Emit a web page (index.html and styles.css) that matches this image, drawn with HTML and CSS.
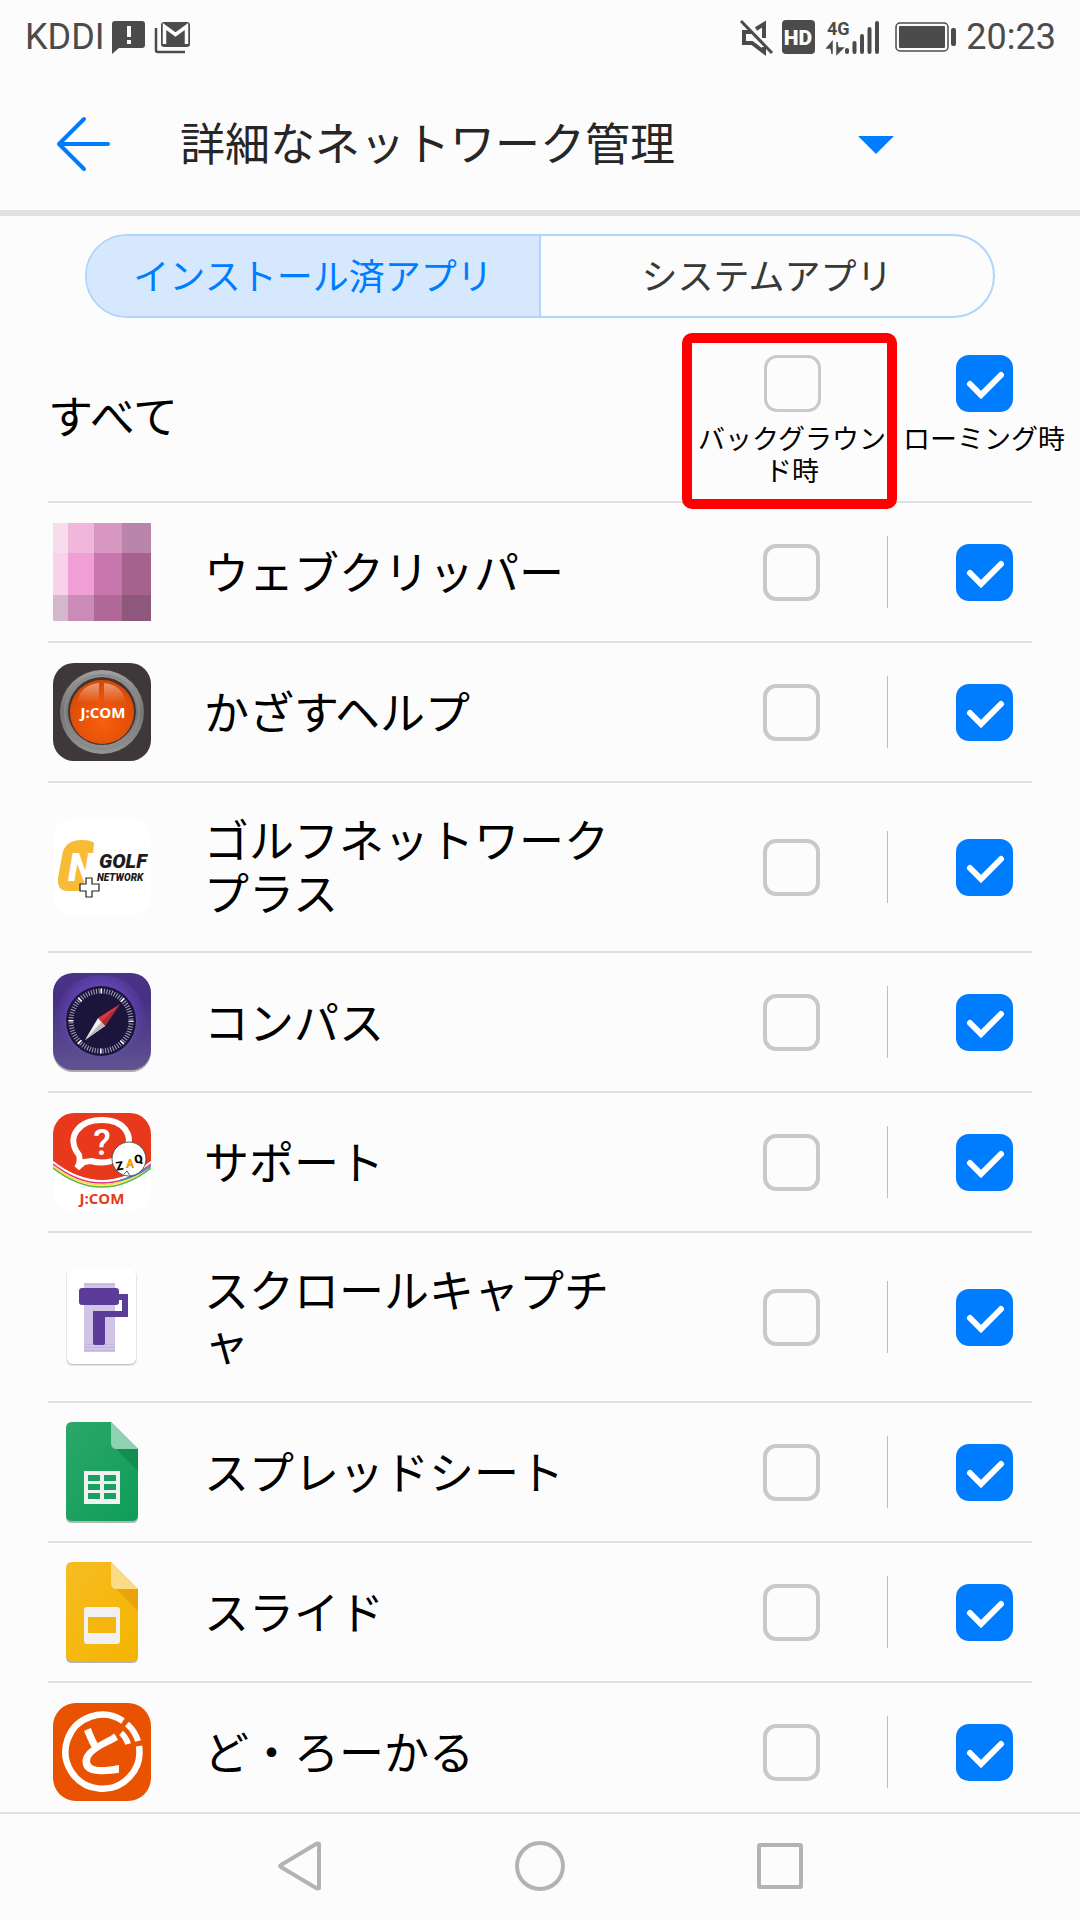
FILE: index.html
```html
<!DOCTYPE html>
<html lang="ja">
<head>
    <meta charset="UTF-8">
    <meta name="viewport" content="width=device-width, initial-scale=1.0">
    <title>詳細なネットワーク管理</title>
    <link rel="stylesheet" href="styles.css">
</head>
<body>
    <div class="status-bar">
        <span>KDDI</span>
        <svg class="message-icon" width="33" height="33" viewBox="0 0 33 33">
            <path d="M3 0h27a3 3 0 0 1 3 3v21a3 3 0 0 1-3 3H7l-7 6V3a3 3 0 0 1 3-3z" fill="#4b4b4b"/>
            <path d="M15 5h4v11h-4zM15 19h4v4h-4z" fill="#fcfcfc"/>
        </svg>
        <svg width="36" height="33" viewBox="0 0 36 33">
            <rect x="6" y="1" width="29" height="25" rx="3" fill="#4b4b4b"/>
            <path d="M9.500 23V5.500l11 8L31.500 5.500V23" fill="none" stroke="#fcfcfc" stroke-width="3.500"/>
            <path d="M1 7v22a2 2 0 0 0 2 2h27" fill="none" stroke="#4b4b4b" stroke-width="2.500"/>
        </svg>
        <div class="status-right">
            <svg width="33" height="34" viewBox="0 0 33 34">
                <path d="M12 12H4v11h8l12 9v-5M16 9l8-5v14" fill="none" stroke="#4b4b4b" stroke-width="4"/>
                <path d="M3 0l30 32" stroke="#fcfcfc" stroke-width="3"/>
                <path d="M1 1l31 32" stroke="#4b4b4b" stroke-width="3"/>
            </svg>
            <svg width="33" height="34" viewBox="0 0 33 34">
                <rect width="33" height="34" rx="4" fill="#4b4b4b"/>
                <text x="16" y="25" class="hd">HD</text>
            </svg>
            <svg class="signal" width="53" height="34" viewBox="0 0 53 34">
                <text x="0" y="15" class="network">4G</text>
                <path d="M5 34V22L0 28h3M10 22v12l6-6h-4" fill="#4b4b4b" stroke="#4b4b4b" stroke-width="1.500"/>
                <path d="M20 30v2M27.500 23v9M35 16v16M42.500 9v23M50 3v29" stroke="#4b4b4b" stroke-width="4" stroke-linecap="round"/>
            </svg>
            <svg width="62" height="30" viewBox="0 0 62 30">
                <rect x="1" y="1" width="52" height="28" rx="4" fill="none" stroke="#4b4b4b" stroke-width="1.500"/>
                <rect x="4" y="4" width="46" height="22" rx="1" fill="#4b4b4b"/>
                <rect x="56" y="6" width="5" height="18" rx="2" fill="#4b4b4b"/>
            </svg>
            <span>20:23</span>
        </div>
    </div>

    <header class="title-bar">
        <button class="back" aria-label="戻る">
            <svg width="56" height="56" viewBox="0 0 56 56">
                <path d="M28 3L3 28l25 25M3 28h49" fill="none" stroke="#007dff" stroke-width="4" stroke-linecap="round" stroke-linejoin="round"/>
            </svg>
        </button>
        <h1>詳細なネットワーク管理</h1>
        <button class="more" aria-label="メニュー">
            <svg width="36" height="18" viewBox="0 0 36 18"><path d="M0 0h36L18 18z" fill="#007dff"/></svg>
        </button>
    </header>

    <main>
        <div class="tabs">
            <button class="active">インストール済アプリ</button>
            <button>システムアプリ</button>
        </div>

        <div class="all-row">
            <span class="all-title">すべて</span>
            <div class="all-col highlight">
                <input type="checkbox" id="all-background">
                <label for="all-background">バックグラウンド時</label>
            </div>
            <div class="all-col">
                <input type="checkbox" id="all-roaming" checked>
                <label for="all-roaming">ローミング時</label>
            </div>
        </div>

        <ul class="apps">
            <li>
                <svg class="app-icon" viewBox="0 0 98 98">
                    <path d="M0 0h15v30H0z" fill="#f7dcee"/><path d="M15 0h26v30H15z" fill="#f1b6dc"/>
                    <path d="M41 0h28v30H41z" fill="#d797c1"/><path d="M69 0h29v30H69z" fill="#b985aa"/>
                    <path d="M0 30h15v42H0z" fill="#f7d2ea"/><path d="M15 30h26v42H15z" fill="#ef9fd5"/>
                    <path d="M41 30h28v42H41z" fill="#c877ae"/><path d="M69 30h29v42H69z" fill="#a4628d"/>
                    <path d="M0 72h15v26H0z" fill="#d3b8cc"/><path d="M15 72h26v26H15z" fill="#ca8bb6"/>
                    <path d="M41 72h28v26H41z" fill="#b06898"/><path d="M69 72h29v26H69z" fill="#8e587c"/>
                </svg>
                <span class="name">ウェブクリッパー</span>
                <input type="checkbox" aria-label="ウェブクリッパー バックグラウンド時">
                <span class="divider"></span>
                <input type="checkbox" aria-label="ウェブクリッパー ローミング時" checked>
            </li>
            <li>
                <svg class="app-icon" viewBox="0 0 98 98">
                    <defs>
                        <radialGradient id="orange" cx="50%" cy="65%" r="60%">
                            <stop offset="0" stop-color="#fa5f0c"/><stop offset="1" stop-color="#d94a08"/>
                        </radialGradient>
                        <linearGradient id="ring" x1="0" y1="0" x2="0" y2="1">
                            <stop offset="0" stop-color="#a09f9f"/><stop offset=".5" stop-color="#747474"/><stop offset="1" stop-color="#969595"/>
                        </linearGradient>
                        <linearGradient id="shine" x1="0" y1="0" x2="0" y2="1">
                            <stop offset="0" stop-color="#fff" stop-opacity=".45"/><stop offset="1" stop-color="#fff" stop-opacity="0"/>
                        </linearGradient>
                    </defs>
                    <rect width="98" height="98" rx="21" fill="#3e3938"/>
                    <circle cx="49" cy="49" r="42" fill="url(#ring)"/>
                    <circle cx="49" cy="49" r="37" fill="none" stroke="#898989" stroke-width="2"/>
                    <circle cx="49" cy="48" r="34" fill="#443430"/>
                    <circle cx="49" cy="49" r="32" fill="url(#orange)"/>
                    <path d="M46 20v20H24q3-18 22-20zM51 20v20h22q-3-18-22-20z" fill="url(#shine)"/>
                    <text x="50" y="55" class="jcom" fill="#fff">J:COM</text>
                </svg>
                <span class="name">かざすヘルプ</span>
                <input type="checkbox" aria-label="かざすヘルプ バックグラウンド時">
                <span class="divider"></span>
                <input type="checkbox" aria-label="かざすヘルプ ローミング時" checked>
            </li>
            <li>
                <svg class="app-icon" viewBox="0 0 98 98">
                    <rect width="98" height="98" rx="21" fill="#fff"/>
                    <path d="M41 25Q38 22 29 22Q11 22 9 38L5 60Q4 73 15 73H24Q30 73 31 64L38 58Z" fill="#f7bb35"/>
                    <text x="15" y="63" class="golf-n">N</text>
                    <text x="46" y="50" class="golf">GOLF</text>
                    <text x="44" y="63" class="golf-sub">NETWORK</text>
                    <path d="M33 60h6v6h7v7h-7v6h-6v-6h-6v-7h6z" fill="#fff" stroke="#222" stroke-width="1.200"/>
                </svg>
                <span class="name">ゴルフネットワークプラス</span>
                <input type="checkbox" aria-label="ゴルフネットワークプラス バックグラウンド時">
                <span class="divider"></span>
                <input type="checkbox" aria-label="ゴルフネットワークプラス ローミング時" checked>
            </li>
            <li>
                <svg class="app-icon" viewBox="0 0 98 98">
                    <defs>
                        <linearGradient id="violet" x1="0" y1="0" x2="0" y2="1">
                            <stop offset="0" stop-color="#4b3487"/><stop offset=".3" stop-color="#463083"/><stop offset="1" stop-color="#605393"/>
                        </linearGradient>
                        <radialGradient id="glow" cx="50%" cy="42%" r="50%">
                            <stop offset=".65" stop-color="#6a48c0"/><stop offset="1" stop-color="#6a48c0" stop-opacity="0"/>
                        </radialGradient>
                    </defs>
                    <rect y="1" width="98" height="98" rx="20" fill="#aaa"/>
                    <rect width="98" height="97" rx="20" fill="url(#violet)"/>
                    <circle cx="48" cy="48" r="46" fill="url(#glow)" opacity=".7"/>
                    <circle cx="48" cy="50" r="36" fill="#5d4d97"/>
                    <circle cx="48" cy="48" r="35" fill="#1b153b"/>
                    <circle cx="48" cy="48" r="30" fill="none" stroke="#a9a5bd" stroke-width="5" stroke-dasharray="1 1.618"/>
                    <circle cx="48" cy="48" r="30" fill="none" stroke="#fff" stroke-width="5" stroke-dasharray="1.500 22.060" stroke-dashoffset=".7"/>
                    <path d="M67 31L45 45l7 8z" fill="#d9383c"/>
                    <path d="M67 31L48.500 49l3.500 4z" fill="#a92b38"/>
                    <path d="M32 67l13-22 7 8z" fill="#f2f2f2"/>
                    <path d="M32 67l16.500-18 3.500 4z" fill="#bbb"/>
                </svg>
                <span class="name">コンパス</span>
                <input type="checkbox" aria-label="コンパス バックグラウンド時">
                <span class="divider"></span>
                <input type="checkbox" aria-label="コンパス ローミング時" checked>
            </li>
            <li>
                <svg class="app-icon" viewBox="0 0 98 98">
                    <defs><clipPath id="tile"><rect width="98" height="98" rx="21"/></clipPath></defs>
                    <g clip-path="url(#tile)">
                        <rect width="98" height="98" fill="#fff"/>
                        <path d="M0 0h98v48Q49 86 0 48z" fill="#e8391d"/>
                        <g fill="none" stroke-width="1.500">
                            <path d="M0 49Q49 87 98 49" stroke="#fff"/>
                            <path d="M0 51Q49 89 98 51" stroke="#e5258c"/>
                            <path d="M0 53Q49 91 98 53" stroke="#ffe04a" stroke-width="2"/>
                            <path d="M0 55Q49 93 98 55" stroke="#57b545"/>
                            <path d="M66 68Q84 63 98 53" stroke="#2a8fd0"/>
                        </g>
                    </g>
                    <path d="M31 49L24 55Q28 49 26 42C12 24 26 7 49 7S80 23 74 36C68 48 52 52 38 48Z" fill="none" stroke="#fff" stroke-width="6"/>
                    <text x="49" y="42" class="question">?</text>
                    <circle cx="76" cy="46" r="17" fill="#fff" stroke="#333" stroke-width=".8"/>
                    <path d="M71 61l3-3 3 5" fill="#fff" stroke="#333" stroke-width=".8"/>
                    <g class="zaq">
                        <text x="63" y="57" transform="rotate(-8 67 53)">Z</text>
                        <text x="73" y="55" fill="#f59a00">A</text>
                        <text x="81" y="50" transform="rotate(-12 86 45)">Q</text>
                    </g>
                    <text x="49" y="91" class="jcom" fill="#e8391d">J:COM</text>
                </svg>
                <span class="name">サポート</span>
                <input type="checkbox" aria-label="サポート バックグラウンド時">
                <span class="divider"></span>
                <input type="checkbox" aria-label="サポート ローミング時" checked>
            </li>
            <li>
                <svg class="app-icon" viewBox="0 0 98 98">
                    <rect x="13" y="2" width="71" height="96" rx="6" fill="#e6e6e6"/>
                    <rect x="14" y="3" width="69" height="94" rx="6" fill="#c4c4c4"/>
                    <rect x="14" y="1" width="69" height="95" rx="6" fill="#fff"/>
                    <path d="M31 15h31v69H31z" fill="#d1c4e7"/>
                    <path d="M31 16.500h31M31 76.500h31M31 79.500h31M31 82.500h31" stroke="#c4b4de"/>
                    <rect x="26" y="20" width="40" height="17" rx="3" fill="#5c3c99"/>
                    <path d="M65 29h7v17H43" fill="none" stroke="#5c3c99" stroke-width="6"/>
                    <path d="M40 43h12v32q0 2-2 2h-8q-2 0-2-2z" fill="#5c3c99"/>
                </svg>
                <span class="name">スクロールキャプチャ</span>
                <input type="checkbox" aria-label="スクロールキャプチャ バックグラウンド時">
                <span class="divider"></span>
                <input type="checkbox" aria-label="スクロールキャプチャ ローミング時" checked>
            </li>
            <li>
                <svg class="app-icon" viewBox="0 0 98 98">
                    <defs>
                        <linearGradient id="green" x1="0" y1="0" x2="1" y2="1">
                            <stop offset="0" stop-color="#2ba76a"/><stop offset="1" stop-color="#0f9d58"/>
                        </linearGradient>
                    </defs>
                    <path d="M20 1h38l27 27v66q0 6-6 6H19q-6 0-6-6V8z" fill="#b5b5b5"/>
                    <path d="M19-1h39l27 27v66q0 6-6 6H19q-6 0-6-6V5q0-6 6-6z" fill="url(#green)"/>
                    <path d="M63 26h22v22z" fill="#0b8043" opacity=".55"/>
                    <path d="M58-1l27 27H64q-6 0-6-6z" fill="#8fd1b3"/>
                    <path d="M31 48h36v33H31z" fill="#f1f1f1"/>
                    <path d="M35 52h12v6H35zM51 52h12v6H51zM35 61h12v6H35zM51 61h12v6H51zM35 70h12v6H35zM51 70h12v6H51z" fill="#18a05e"/>
                </svg>
                <span class="name">スプレッドシート</span>
                <input type="checkbox" aria-label="スプレッドシート バックグラウンド時">
                <span class="divider"></span>
                <input type="checkbox" aria-label="スプレッドシート ローミング時" checked>
            </li>
            <li>
                <svg class="app-icon" viewBox="0 0 98 98">
                    <defs>
                        <linearGradient id="yellow" x1="0" y1="0" x2="1" y2="1">
                            <stop offset="0" stop-color="#f6bd22"/><stop offset="1" stop-color="#f4b400"/>
                        </linearGradient>
                    </defs>
                    <path d="M20 1h38l27 27v66q0 6-6 6H19q-6 0-6-6V8z" fill="#b5b5b5"/>
                    <path d="M19-1h39l27 27v66q0 6-6 6H19q-6 0-6-6V5q0-6 6-6z" fill="url(#yellow)"/>
                    <path d="M63 26h22v22z" fill="#e69508" opacity=".6"/>
                    <path d="M58-1l27 27H64q-6 0-6-6z" fill="#fadc87"/>
                    <rect x="31" y="44" width="36" height="37" rx="3" fill="#f1f1f1"/>
                    <path d="M35 54h28v16H35z" fill="#f4b510"/>
                </svg>
                <span class="name">スライド</span>
                <input type="checkbox" aria-label="スライド バックグラウンド時">
                <span class="divider"></span>
                <input type="checkbox" aria-label="スライド ローミング時" checked>
            </li>
            <li>
                <svg class="app-icon" viewBox="0 0 98 98">
                    <rect width="98" height="98" rx="23" fill="#e85200"/>
                    <path d="M70 18A37 37 0 1 0 86 43" fill="none" stroke="#fff" stroke-width="6.500"/>
                    <path d="M74 21Q82 28 85 38M68 30Q73 34 75 41" fill="none" stroke="#fff" stroke-width="6"/>
                    <text x="47" y="69" class="local">と</text>
                </svg>
                <span class="name">ど・ろーかる</span>
                <input type="checkbox" aria-label="ど・ろーかる バックグラウンド時">
                <span class="divider"></span>
                <input type="checkbox" aria-label="ど・ろーかる ローミング時" checked>
            </li>
        </ul>
    </main>

    <nav>
        <button aria-label="戻る">
            <svg width="50" height="50" viewBox="0 0 50 50"><path d="M44 3v44q-1 1-3 0L6 26q-2-1 0-2L41 3q2-1 3 0z"/></svg>
        </button>
        <button aria-label="ホーム">
            <svg width="50" height="50" viewBox="0 0 50 50"><circle cx="25" cy="25" r="23"/></svg>
        </button>
        <button aria-label="履歴">
            <svg width="50" height="50" viewBox="0 0 50 50"><rect x="4" y="4" width="42" height="42" rx="1"/></svg>
        </button>
    </nav>
</body>
</html>
```
FILE: styles.css
```css
* {
    margin: 0;
    padding: 0;
    box-sizing: border-box;
}
body {
    display: flex;
    flex-direction: column;
    height: 100vh;
    background: #fcfcfc;
    color: #000;
    font-family: "Noto Sans CJK JP", sans-serif;
}
svg {
    display: block;
    flex-shrink: 0;
    overflow: visible;
}
button {
    border: none;
    background: none;
    font-family: inherit;
    cursor: pointer;
}

/* status bar */
.status-bar {
    display: flex;
    align-items: center;
    flex-shrink: 0;
    height: 76px;
    padding: 0 24px 2px 25px;
    font-family: Roboto, sans-serif;
    font-size: 36px;
    color: #4b4b4b;
}
.message-icon {
    margin: 0 10px 0 7px;
}
.status-right {
    display: flex;
    align-items: center;
    gap: 9px;
    margin-left: auto;
}
.signal {
    margin: 0 6px 0 3px;
}
.hd {
    font-size: 21px;
    font-weight: 900;
    text-anchor: middle;
    fill: #fcfcfc;
}
.network {
    font-size: 18px;
    font-weight: bold;
    fill: #4b4b4b;
}

/* title */
.title-bar {
    display: flex;
    align-items: center;
    flex-shrink: 0;
    height: 140px;
    padding: 2px 186px 0 56px;
    border-bottom: 6px solid #e1e1e1;
}
.title-bar h1 {
    flex: 1;
    margin-left: 68px;
    padding-bottom: 4px;
    font-size: 45px;
    line-height: 60px;
    font-weight: normal;
    color: #262626;
}
.more {
    padding-top: 2px;
}

main {
    flex: 1;
    min-height: 0;
    overflow-y: auto;
    scrollbar-width: none;
}

/* tabs */
.tabs {
    display: flex;
    height: 84px;
    margin: 18px 85px 0;
    border: 2px solid #b0d5fc;
    border-radius: 42px;
    overflow: hidden;
}
.tabs button {
    flex: 1;
    padding-bottom: 4px;
    font-size: 36px;
    color: #383838;
}
.tabs .active {
    background: #d6e8fd;
    border-right: 2px solid #b0d5fc;
    color: #007dff;
}

/* checkboxes */
input[type="checkbox"] {
    appearance: none;
    flex-shrink: 0;
    width: 57px;
    height: 57px;
    border: 3px solid #c9c9c9;
    border-radius: 13px;
    cursor: pointer;
}
input[type="checkbox"]:checked {
    border: none;
    background: #007dff url("data:image/svg+xml,%3Csvg xmlns='http://www.w3.org/2000/svg' viewBox='0 0 57 57'%3E%3Cpath d='M14 29l11 11 20-20' fill='none' stroke='white' stroke-width='6' stroke-linecap='round'/%3E%3C/svg%3E");
}

.all-row {
    display: flex;
    height: 185px;
    margin: 0 48px;
    border-bottom: 2px solid #e1e1e1;
}
.all-title {
    flex: 1;
    padding-top: 14px;
    font-size: 45px;
    line-height: 165px;
}
.all-col {
    display: flex;
    flex-direction: column;
    align-items: center;
    gap: 10px;
    width: 192px;
    padding-top: 37px;
    position: relative;
}
.all-col:last-child {
    margin-right: -48px;
}
.all-col label {
    font-size: 27px;
    line-height: 32px;
    text-align: center;
}
.highlight::before {
    content: "";
    position: absolute;
    top: 15px;
    right: -9px;
    bottom: -8px;
    left: -14px;
    border: 10px solid #f00;
    border-radius: 10px;
    pointer-events: none;
}

/* app list */
.apps {
    list-style: none;
    margin: 0 48px;
}
.apps li {
    display: flex;
    align-items: center;
    min-height: 140px;
    padding: 29px 19px 29px 5px;
    border-bottom: 2px solid #e1e1e1;
}
.apps input[type="checkbox"]:not(:checked) {
    border-width: 4px;
}
.app-icon {
    width: 98px;
    height: 98px;
    margin: -16px 53px -16px 0;
}
.name {
    flex: 0 1 420px;
    margin-right: auto;
    padding-bottom: 4px;
    font-size: 45px;
    line-height: 53px;
    line-break: anywhere;
}
.divider {
    width: 1px;
    height: 72px;
    margin: 0 68px 0 67px;
    background: #bdbdbd;
}
.jcom {
    font-family: "Open Sans", sans-serif;
    font-size: 15px;
    font-weight: bold;
    text-anchor: middle;
}
.golf, .golf-sub, .golf-n {
    font-family: Roboto, sans-serif;
    font-style: italic;
    font-weight: 900;
    fill: #1c1c1c;
}
.golf {
    font-size: 20px;
}
.golf-sub {
    font-size: 10px;
}
.golf-n {
    font-size: 38px;
    fill: #fff;
}
.question {
    font-family: Roboto, sans-serif;
    font-size: 36px;
    font-weight: 500;
    text-anchor: middle;
    fill: #fff;
}
.zaq {
    font-family: Roboto, sans-serif;
    font-size: 12px;
    font-weight: 900;
}
.local {
    font-size: 54px;
    font-weight: bold;
    text-anchor: middle;
    fill: #fff;
}

/* navigation */
nav {
    display: flex;
    justify-content: center;
    align-items: center;
    flex-shrink: 0;
    gap: 190px;
    height: 108px;
    padding-bottom: 2px;
    border-top: 2px solid #e1e1e1;
}
nav svg {
    fill: none;
    stroke: #b3b3b3;
    stroke-width: 4;
}
```
